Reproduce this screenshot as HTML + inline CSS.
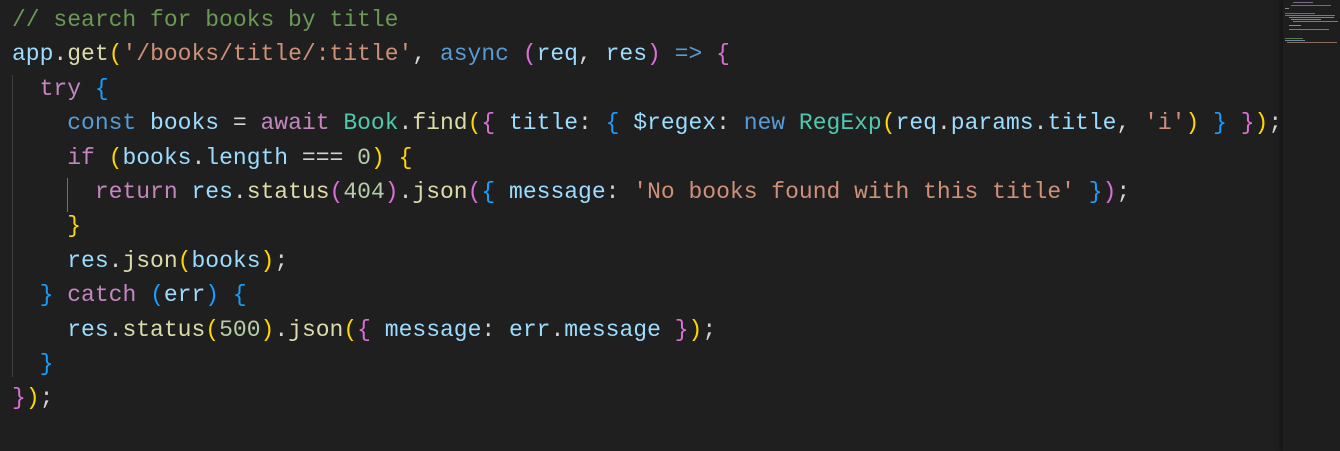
<!DOCTYPE html><html><head><style>
body{margin:0;width:1340px;height:451px;background:#1f1f1f;overflow:hidden;position:relative}
pre{margin:0;position:absolute;left:12px;top:3px;font-family:"Liberation Mono",monospace;font-size:23px;line-height:34.4px;color:#d4d4d4}
.c{color:#6a9955}.k{color:#c586c0}.b{color:#569cd6}.v{color:#9cdcfe}.f{color:#dcdcaa}.s{color:#ce9178}.n{color:#b5cea8}.t{color:#4ec9b0}
.g{color:#ffd700}.p{color:#da70d6}.q{color:#179fff}
.guide{position:absolute;width:1px;background:#404040}
.mm{position:absolute;left:1283px;top:0;width:57px;height:451px;background:#1e1e1e;box-shadow:-3px 0 4px #151515}
.ml{position:absolute;height:1px}
</style></head><body>
<div class="guide" style="left:12px;top:75px;height:302px"></div>
<div class="guide" style="left:67px;top:178px;height:34px;background:#707070"></div>
<pre><span class="c">// search for books by title</span>
<span class="v">app</span>.<span class="f">get</span><span class="g">(</span><span class="s">'/books/title/:title'</span>, <span class="b">async</span> <span class="p">(</span><span class="v">req</span>, <span class="v">res</span><span class="p">)</span> <span class="b">=&gt;</span> <span class="p">{</span>
  <span class="k">try</span> <span class="q">{</span>
    <span class="b">const</span> <span class="v">books</span> = <span class="k">await</span> <span class="t">Book</span>.<span class="f">find</span><span class="g">(</span><span class="p">{</span> <span class="v">title</span>: <span class="q">{</span> <span class="v">$regex</span>: <span class="b">new</span> <span class="t">RegExp</span><span class="g">(</span><span class="v">req</span>.<span class="v">params</span>.<span class="v">title</span>, <span class="s">'i'</span><span class="g">)</span> <span class="q">}</span> <span class="p">}</span><span class="g">)</span>;
    <span class="k">if</span> <span class="g">(</span><span class="v">books</span>.<span class="v">length</span> === <span class="n">0</span><span class="g">)</span> <span class="g">{</span>
      <span class="k">return</span> <span class="v">res</span>.<span class="f">status</span><span class="p">(</span><span class="n">404</span><span class="p">)</span>.<span class="f">json</span><span class="p">(</span><span class="q">{</span> <span class="v">message</span>: <span class="s">'No books found with this title'</span> <span class="q">}</span><span class="p">)</span>;
    <span class="g">}</span>
    <span class="v">res</span>.<span class="f">json</span><span class="g">(</span><span class="v">books</span><span class="g">)</span>;
  <span class="q">}</span> <span class="k">catch</span> <span class="q">(</span><span class="v">err</span><span class="q">)</span> <span class="q">{</span>
    <span class="v">res</span>.<span class="f">status</span><span class="g">(</span><span class="n">500</span><span class="g">)</span>.<span class="f">json</span><span class="g">(</span><span class="p">{</span> <span class="v">message</span>: <span class="v">err</span>.<span class="v">message</span> <span class="p">}</span><span class="g">)</span>;
  <span class="q">}</span>
<span class="p">}</span><span class="g">)</span>;</pre>
<div class="mm">
<div class="ml" style="left:10px;top:2px;width:20px;background:#7a6a8a"></div>
<div class="ml" style="left:8px;top:5px;width:40px;background:#5a7a6a"></div>
<div class="ml" style="left:2px;top:8px;width:4px;background:#888"></div>
<div class="ml" style="left:2px;top:13px;width:30px;background:#5a7a4a"></div>
<div class="ml" style="left:2px;top:15px;width:50px;background:#6a7a9a"></div>
<div class="ml" style="left:6px;top:17px;width:45px;background:#6a8aaa"></div>
<div class="ml" style="left:8px;top:19px;width:30px;background:#8a7a9a"></div>
<div class="ml" style="left:10px;top:21px;width:45px;background:#8a7a6a"></div>
<div class="ml" style="left:6px;top:25px;width:12px;background:#7a8aaa"></div>
<div class="ml" style="left:6px;top:29px;width:40px;background:#7a7a7a"></div>
<div class="ml" style="left:2px;top:38px;width:18px;background:#5a7a4a"></div>
<div class="ml" style="left:2px;top:40px;width:20px;background:#6a8aaa"></div>
<div class="ml" style="left:4px;top:42px;width:50px;background:#8a6a5a"></div>
</div>
</body></html>
